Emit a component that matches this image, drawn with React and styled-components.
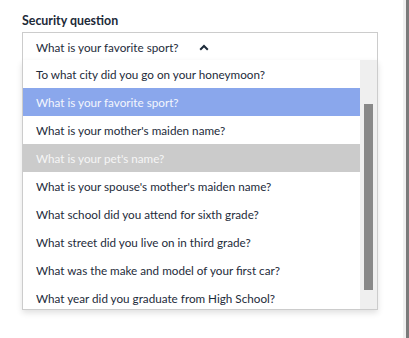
import React from "react";
import styled, { createGlobalStyle } from "styled-components";

const GlobalStyle = createGlobalStyle`
  html, body {
    margin: 0;
    padding: 0;
    background: #fff;
  }
  body {
    font-family: Lato, "Open Sans", sans-serif;
    color: #1d2b3a;
  }
`;

const Page = styled.div`
  display: flex;
  height: 338px;
  overflow: hidden;
`;

const Main = styled.div`
  flex: 1;
  padding: 13px 0 0 22px;
`;

const Rail = styled.div`
  width: 3px;
  border-left: 3px solid #f0f0f0;
  background: #7b7b7b;
`;

const Field = styled.div`
  position: relative;
  width: 356px;
`;

const Label = styled.div`
  font-size: 12.4px;
  font-weight: 700;
  line-height: 16px;
  margin-bottom: 3px;
  color: #1c2a38;
`;

const SelectBox = styled.div`
  box-sizing: border-box;
  height: 29px;
  border: 1px solid #cccccc;
  display: flex;
  align-items: center;
  gap: 20px;
  padding-left: 13px;
  font-size: 11.7px;
  line-height: 16px;
  background: #fff;
`;

const Caret = styled.svg`
  width: 10px;
  height: 7px;
  margin-top: 1px;
`;

// dropdown menu lies over the rest of the form
const Menu = styled.div`
  position: absolute;
  top: 47px;
  left: 0;
  box-sizing: border-box;
  width: 356px;
  height: 250px;
  display: flex;
  border: 1px solid #cccccc;
  border-top: none;
  background: #fff;
  box-shadow: 0 3px 6px rgba(0, 0, 0, 0.12);
`;

const List = styled.div`
  flex: 1;
  overflow: hidden;
`;

const Track = styled.div`
  width: 17px;
  flex: none;
  background: #efefef;
`;

const Thumb = styled.div`
  width: 9px;
  height: 186px;
  margin: 44px 4px 0;
  background: #888888;
`;

const Option = styled.div`
  height: 28px;
  display: flex;
  align-items: center;
  padding-left: 13px;
  font-size: 11.7px;
  white-space: nowrap;
  background: ${(p) => (p.$selected ? "#8aa7ec" : p.$hover ? "#cbcbcb" : "#fff")};
  color: ${(p) => (p.$selected ? "#f4f6fd" : p.$hover ? "#f6f6f6" : "#1d2b3a")};
`;

const questions = [
  "To what city did you go on your honeymoon?",
  "What is your favorite sport?",
  "What is your mother's maiden name?",
  "What is your pet's name?",
  "What is your spouse's mother's maiden name?",
  "What school did you attend for sixth grade?",
  "What street did you live on in third grade?",
  "What was the make and model of your first car?",
  "What year did you graduate from High School?",
];

export default function App() {
  const selected = "What is your favorite sport?";

  return (
    <Page>
      <GlobalStyle />
      <Main>
        <Field>
          <Label>Security question</Label>
          <SelectBox>
            <span>{selected}</span>
            <Caret viewBox="0 0 10 7">
              <path d="M1.2 5.8 L5 2 L8.8 5.8" fill="none" stroke="#1d2b3a" strokeWidth="2" />
            </Caret>
          </SelectBox>
          <Menu>
            <List>
              {questions.map((q) => (
                <Option
                  key={q}
                  $selected={q === selected}
                  $hover={q === "What is your pet's name?"}
                >
                  {q}
                </Option>
              ))}
            </List>
            <Track>
              <Thumb />
            </Track>
          </Menu>
        </Field>
      </Main>
      <Rail />
    </Page>
  );
}
